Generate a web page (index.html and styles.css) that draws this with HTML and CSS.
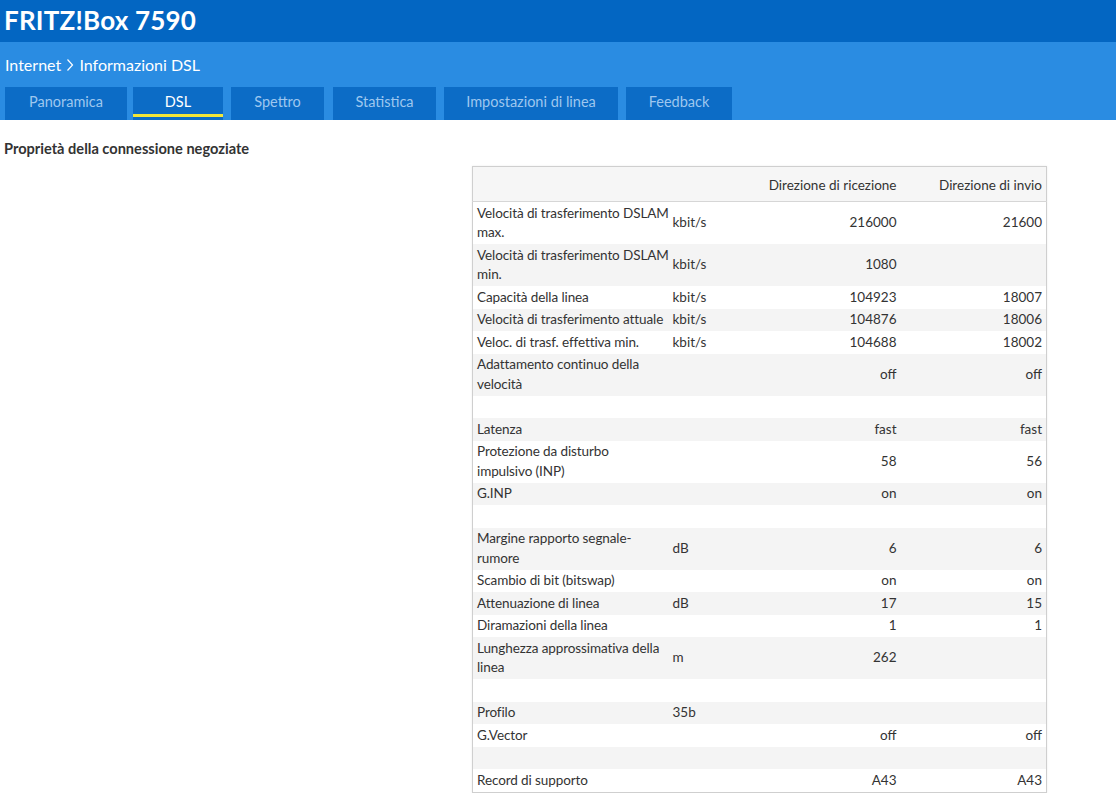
FILE: index.html
```html
<!DOCTYPE html>
<html lang="it">
<head>
<meta charset="utf-8">
<title>FRITZ!Box 7590</title>
<link rel="stylesheet" href="styles.css">
</head>
<body>
<header class="top">
  <div class="brand">FRITZ!Box 7590</div>
</header>
<div class="subbar">
  <div class="crumbs">Internet <svg class="sep" width="8" height="14" viewBox="0 0 8 14"><path d="M1.5 1.5 L6.5 7 L1.5 12.5" fill="none" stroke="#fff" stroke-width="1.2"/></svg> Informazioni DSL</div>
  <nav class="tabs">
    <a class="tab t1">Panoramica</a>
    <a class="tab t2 active">DSL</a>
    <a class="tab t3">Spettro</a>
    <a class="tab t4">Statistica</a>
    <a class="tab t5">Impostazioni di linea</a>
    <a class="tab t6">Feedback</a>
  </nav>
</div>
<main class="content">
  <h2 class="title">Proprietà della connessione negoziate</h2>
  <div class="wrap">
    <table class="dsl">
      <thead>
        <tr><th class="c1"></th><th class="c2"></th><th class="c3">Direzione di ricezione</th><th class="c4">Direzione di invio</th></tr>
      </thead>
      <tbody>
        <tr><td>Velocità di trasferimento DSLAM<br>max.</td><td>kbit/s</td><td class="n">216000</td><td class="n">21600</td></tr>
        <tr><td>Velocità di trasferimento DSLAM<br>min.</td><td>kbit/s</td><td class="n">1080</td><td class="n"></td></tr>
        <tr><td>Capacità della linea</td><td>kbit/s</td><td class="n">104923</td><td class="n">18007</td></tr>
        <tr><td>Velocità di trasferimento attuale</td><td>kbit/s</td><td class="n">104876</td><td class="n">18006</td></tr>
        <tr><td>Veloc. di trasf. effettiva min.</td><td>kbit/s</td><td class="n">104688</td><td class="n">18002</td></tr>
        <tr><td>Adattamento continuo della<br>velocità</td><td></td><td class="n">off</td><td class="n">off</td></tr>
        <tr class="empty"><td></td><td></td><td></td><td></td></tr>
        <tr><td>Latenza</td><td></td><td class="n">fast</td><td class="n">fast</td></tr>
        <tr><td>Protezione da disturbo<br>impulsivo (INP)</td><td></td><td class="n">58</td><td class="n">56</td></tr>
        <tr><td>G.INP</td><td></td><td class="n">on</td><td class="n">on</td></tr>
        <tr class="empty"><td></td><td></td><td></td><td></td></tr>
        <tr><td>Margine rapporto segnale-<br>rumore</td><td>dB</td><td class="n">6</td><td class="n">6</td></tr>
        <tr><td>Scambio di bit (bitswap)</td><td></td><td class="n">on</td><td class="n">on</td></tr>
        <tr><td>Attenuazione di linea</td><td>dB</td><td class="n">17</td><td class="n">15</td></tr>
        <tr><td>Diramazioni della linea</td><td></td><td class="n">1</td><td class="n">1</td></tr>
        <tr><td>Lunghezza approssimativa della<br>linea</td><td>m</td><td class="n">262</td><td class="n"></td></tr>
        <tr class="empty"><td></td><td></td><td></td><td></td></tr>
        <tr><td>Profilo</td><td>35b</td><td class="n"></td><td class="n"></td></tr>
        <tr><td>G.Vector</td><td></td><td class="n">off</td><td class="n">off</td></tr>
        <tr class="empty"><td></td><td></td><td></td><td></td></tr>
        <tr><td>Record di supporto</td><td></td><td class="n">A43</td><td class="n">A43</td></tr>
      </tbody>
    </table>
  </div>
</main>
</body>
</html>
```
FILE: styles.css
```css
* { box-sizing: border-box; }
body {
  margin: 0;
  font-family: Lato, "Open Sans", "Liberation Sans", sans-serif;
  color: #333;
  background: #fff;
}
.top {
  background: #0366c2;
  height: 42px;
  padding: 4px 0 0 4px;
}
.brand {
  color: #fff;
  font-size: 26px;
  font-weight: bold;
  line-height: 32px;
  letter-spacing: 0.2px;
}
.subbar {
  background: #2a8ce2;
  height: 78px;
  padding: 0 0 0 5px;
  display: flex;
  flex-direction: column;
}
.crumbs {
  color: #fff;
  font-size: 16px;
  line-height: 20px;
  margin-top: 13px;
  height: 32px;
}
.sep { vertical-align: -1px; margin: 0 1px; }
.tabs {
  display: flex;
  height: 33px;
}
.tab {
  display: flex;
  align-items: center;
  justify-content: center;
  background: #0c6cc6;
  color: #9ec7ef;
  font-size: 14.5px;
  height: 33px;
  padding-bottom: 4px;
  position: relative;
}
.t1 { width: 122px; margin-right: 6px; }
.t2 { width: 90px; margin-right: 8px; }
.t3 { width: 93px; margin-right: 9px; }
.t4 { width: 103px; margin-right: 8px; }
.t5 { width: 174px; margin-right: 8px; }
.t6 { width: 106px; }
.tab.active { color: #fff; }
.tab.active::after {
  content: "";
  position: absolute;
  left: 0;
  right: 0;
  bottom: 3px;
  height: 3px;
  background: #f1e63a;
}
.content { padding: 0 0 0 4px; }
.title {
  font-size: 14.6px;
  font-weight: bold;
  margin: 20px 0 8px 0;
  line-height: 18px;
  color: #333;
}
.wrap {
  display: flex;
  justify-content: flex-end;
  padding-right: 69px;
}
.dsl {
  width: 575px;
  border-collapse: collapse;
  border: 1px solid #cfcfcf;
  box-shadow: 0 0 2px rgba(0,0,0,0.08);
  font-size: 13.5px;
  color: #333;
  table-layout: fixed;
}
.dsl th {
  font-weight: normal;
  text-align: right;
  height: 35px;
  padding: 2px 4px 0 4px;
  background: #f6f6f6;
  border-bottom: 1px solid #d6d6d6;
}
.dsl .c1 { width: 196px; }
.dsl .c2 { width: 78px; }
.dsl .c3 { width: 154px; }
.dsl td {
  padding: 1.5px 4px 1.5px 4px;
  line-height: 19.5px;
  vertical-align: middle;
  text-align: left;
}
.dsl td:first-child { padding-right: 0; white-space: nowrap; letter-spacing: -0.1px; }
.dsl td.n { text-align: right; }
.dsl tbody tr:nth-child(odd) { background: #fff; }
.dsl tbody tr:nth-child(even) { background: #f4f4f4; }
.dsl tr.empty td { height: 22.5px; }
```
